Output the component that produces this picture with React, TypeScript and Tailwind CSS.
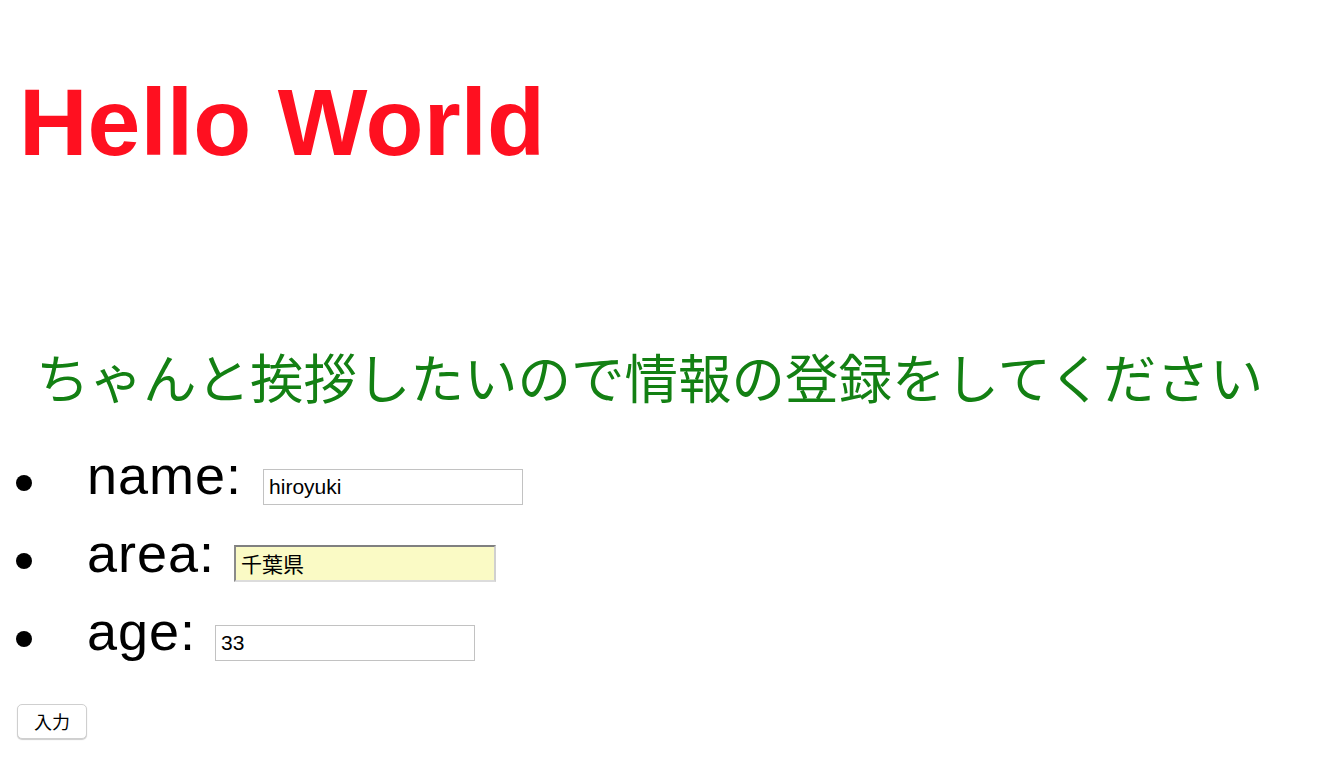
import { useState } from "react";

const latin = "font-['Liberation_Sans',Arial,sans-serif]";
const cjk = "font-['Noto_Sans_CJK_JP',sans-serif]";

type Field = { label: string; value: string; gap: string; filled?: boolean };

const fields: Field[] = [
  { label: "name:", value: "hiroyuki", gap: "ml-[21px]" },
  { label: "area:", value: "千葉県", gap: "ml-[19px]", filled: true },
  { label: "age:", value: "33", gap: "ml-[19px]" },
];

function Row({ field }: { field: Field }) {
  const [value, setValue] = useState(field.value);
  return (
    <li className="flex items-baseline">
      <span className="ml-4 mt-[39px] h-4 w-4 flex-none self-start rounded-full bg-black" />
      <span className={`ml-[55px] text-[54px] leading-[78px] tracking-[1px] text-black ${latin}`}>
        {field.label}
      </span>
      <input
        value={value}
        onChange={(e) => setValue(e.target.value)}
        className={`${field.gap} px-[5px] text-[21px] text-black outline-none ${latin} ${
          field.filled
            ? "h-[37px] w-[262px] border-2 border-t-[#808080] border-l-[#8a8a8a] border-b-[#dcdcdc] border-r-[#d0d0d0] bg-[#fafac5]"
            : "h-9 w-[260px] border border-[#c2c2c2] bg-white"
        }`}
        style={field.filled ? { fontFamily: "'Liberation Sans','Noto Sans CJK JP',sans-serif" } : undefined}
      />
    </li>
  );
}

export default function App() {
  return (
    <div className="min-h-[774px] bg-white pt-[67px]">
      <h1 className={`pl-[19px] text-[95px] font-bold leading-[110px] text-[#ff1020] ${latin}`}>
        Hello World
      </h1>

      <p className={`mt-[172px] pl-[36px] text-[53.5px] leading-[53px] text-[#138013] ${cjk}`}>
        ちゃんと挨拶したいので情報の登録をしてください
      </p>

      <ul className="mt-[34px]">
        {fields.map((f) => (
          <Row key={f.label} field={f} />
        ))}
      </ul>

      <button
        className={`ml-[17px] mt-[34px] h-[35px] w-[70px] rounded-[5px] border border-[#cfcfcf] bg-white text-[18px] text-black shadow-[0_1px_1px_rgba(0,0,0,0.2)] ${cjk}`}
      >
        入力
      </button>
    </div>
  );
}
